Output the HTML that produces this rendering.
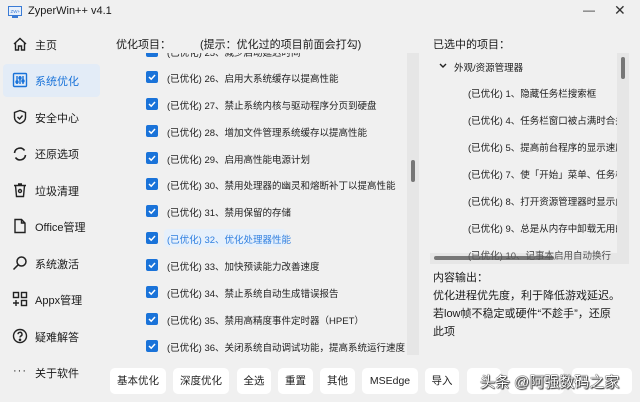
<!DOCTYPE html>
<html><head><meta charset="utf-8"><style>
*{margin:0;padding:0;box-sizing:border-box}
body{width:640px;height:402px;background:#f0f0f0;font-family:"Liberation Sans","Noto Sans CJK SC",sans-serif;color:#1a1a1a;position:relative;overflow:hidden}
.a{position:absolute;white-space:nowrap}
.nav{font-size:11px}
.sel{background:#e3ecf7;border-radius:4px}
.cb{position:absolute;left:6px;width:12px;height:12px;background:#1a73d9;border-radius:2px}
.cb svg{position:absolute;left:1px;top:1px}
.it{position:absolute;left:27px;font-size:9.5px;color:#222;white-space:nowrap}
.r{position:absolute;left:38px;font-size:9.5px;color:#222;white-space:nowrap}
.btn{position:absolute;top:368px;height:26px;background:#fff;border-radius:5px;font-size:10.5px;text-align:center;line-height:26px;color:#222}
</style></head><body>
<svg class="a" style="left:8px;top:6px" width="14" height="12"><rect x="0.5" y="0.5" width="13" height="9" fill="#e8f0fb" stroke="#3a7bd5"/><rect x="4" y="10" width="6" height="2" fill="#3a7bd5"/><text x="2.5" y="7" font-size="4.5" fill="#3a7bd5" font-family="Liberation Sans">ZW+</text></svg>
<div class="a" style="left:28px;top:5px;font-size:11px">ZyperWin++ v4.1</div>
<div class="a" style="left:583px;top:3px;font-size:12px;color:#333">—</div>
<div class="a" style="left:614px;top:2px;font-size:14px;color:#333">✕</div>

<div class="a sel" style="left:3px;top:64px;width:97px;height:33px"></div>
<svg class="a" style="left:12px;top:36px" width="16" height="16" fill="none" stroke="#222" stroke-width="1.4"><path d="M2 8L8 2.5 14 8M3.5 7v7h3v-4h3v4h3V7"/></svg>
<div class="a nav" style="left:35px;top:37px">主页</div>
<svg class="a" style="left:12px;top:72px" width="16" height="16" fill="none" stroke="#1a73d9" stroke-width="1.4"><rect x="1.5" y="1.5" width="13" height="13" rx="1"/><path d="M5 4v8M8 4v8M11 4v8"/><circle cx="5" cy="10" r="1" fill="#1a73d9"/><circle cx="8" cy="6" r="1" fill="#1a73d9"/><circle cx="11" cy="9" r="1" fill="#1a73d9"/></svg>
<div class="a nav" style="left:35px;top:73px;color:#1a73d9">系统优化</div>
<svg class="a" style="left:12px;top:109px" width="16" height="16" fill="none" stroke="#222" stroke-width="1.4"><path d="M8 1.5L2.5 3.5v5c0 3 2.5 5 5.5 6 3-1 5.5-3 5.5-6v-5z"/><path d="M5.5 8l2 2 3-3.5"/></svg>
<div class="a nav" style="left:35px;top:110px">安全中心</div>
<svg class="a" style="left:12px;top:146px" width="16" height="16" fill="none" stroke="#222" stroke-width="1.6"><path d="M2.5 7a5.5 5.5 0 0 1 10-2.5M13.5 9a5.5 5.5 0 0 1-10 2.5"/></svg>
<div class="a nav" style="left:35px;top:146px">还原选项</div>
<svg class="a" style="left:12px;top:182px" width="16" height="16" fill="none" stroke="#222" stroke-width="1.4"><path d="M2 3.5h12M3.5 3.5l1 11h7l1-11M6 2h4"/><circle cx="8" cy="9" r="1.5"/></svg>
<div class="a nav" style="left:35px;top:183px">垃圾清理</div>
<svg class="a" style="left:12px;top:218px" width="16" height="16" fill="none" stroke="#222" stroke-width="1.4"><path d="M3 1.5h6.5l3.5 3.5v9.5H3zM9.5 1.5V5H13"/></svg>
<div class="a nav" style="left:35px;top:219px">Office管理</div>
<svg class="a" style="left:12px;top:255px" width="16" height="16" fill="none" stroke="#222" stroke-width="1.5"><circle cx="9.5" cy="6.5" r="4.5"/><path d="M6.3 9.7L1.5 14.5"/></svg>
<div class="a nav" style="left:35px;top:256px">系统激活</div>
<svg class="a" style="left:12px;top:291px" width="16" height="16" fill="none" stroke="#222" stroke-width="1.4"><rect x="1.5" y="1.5" width="5" height="5"/><rect x="9.5" y="1.5" width="5" height="5"/><rect x="9.5" y="9.5" width="5" height="5"/><path d="M4 9v6M1 12h6"/></svg>
<div class="a nav" style="left:35px;top:292px">Appx管理</div>
<svg class="a" style="left:12px;top:328px" width="16" height="16" fill="none" stroke="#222" stroke-width="1.4"><circle cx="8" cy="8" r="6.5"/><path d="M6 6.2a2 2 0 1 1 2.5 2c-.4.2-.5.6-.5 1.3"/><circle cx="8" cy="11.8" r=".6" fill="#222"/></svg>
<div class="a nav" style="left:35px;top:329px">疑难解答</div>
<div class="a" style="left:13px;top:365px;font-size:11px;letter-spacing:1px">···</div>
<div class="a nav" style="left:35px;top:365px">关于软件</div>

<div class="a" style="left:116px;top:36px;font-size:11px">优化项目：</div>
<div class="a" style="left:200px;top:36px;font-size:11px">(提示：优化过的项目前面会打勾)</div>

<div class="a" style="left:140px;top:53px;width:267px;height:302px;overflow:hidden">
<div class="a sel" style="left:24px;top:176px;width:122px;height:18px;background:#e6f0fb"></div>
<div class="cb" style="top:-8px"></div><div class="it" style="top:-8px">(已优化) 25、减少启动延迟时间</div>
<div class="cb" style="top:18px"><svg width="10" height="10"><path d="M2 5l2.2 2.2L8 3" stroke="#fff" stroke-width="1.5" fill="none"/></svg></div><div class="it" style="top:18px">(已优化) 26、启用大系统缓存以提高性能</div>
<div class="cb" style="top:45px"><svg width="10" height="10"><path d="M2 5l2.2 2.2L8 3" stroke="#fff" stroke-width="1.5" fill="none"/></svg></div><div class="it" style="top:45px">(已优化) 27、禁止系统内核与驱动程序分页到硬盘</div>
<div class="cb" style="top:72px"><svg width="10" height="10"><path d="M2 5l2.2 2.2L8 3" stroke="#fff" stroke-width="1.5" fill="none"/></svg></div><div class="it" style="top:72px">(已优化) 28、增加文件管理系统缓存以提高性能</div>
<div class="cb" style="top:99px"><svg width="10" height="10"><path d="M2 5l2.2 2.2L8 3" stroke="#fff" stroke-width="1.5" fill="none"/></svg></div><div class="it" style="top:99px">(已优化) 29、启用高性能电源计划</div>
<div class="cb" style="top:125px"><svg width="10" height="10"><path d="M2 5l2.2 2.2L8 3" stroke="#fff" stroke-width="1.5" fill="none"/></svg></div><div class="it" style="top:125px">(已优化) 30、禁用处理器的幽灵和熔断补丁以提高性能</div>
<div class="cb" style="top:152px"><svg width="10" height="10"><path d="M2 5l2.2 2.2L8 3" stroke="#fff" stroke-width="1.5" fill="none"/></svg></div><div class="it" style="top:152px">(已优化) 31、禁用保留的存储</div>
<div class="cb" style="top:179px"><svg width="10" height="10"><path d="M2 5l2.2 2.2L8 3" stroke="#fff" stroke-width="1.5" fill="none"/></svg></div><div class="it" style="top:179px;color:#2f7fe0">(已优化) 32、优化处理器性能</div>
<div class="cb" style="top:206px"><svg width="10" height="10"><path d="M2 5l2.2 2.2L8 3" stroke="#fff" stroke-width="1.5" fill="none"/></svg></div><div class="it" style="top:206px">(已优化) 33、加快预读能力改善速度</div>
<div class="cb" style="top:233px"><svg width="10" height="10"><path d="M2 5l2.2 2.2L8 3" stroke="#fff" stroke-width="1.5" fill="none"/></svg></div><div class="it" style="top:233px">(已优化) 34、禁止系统自动生成错误报告</div>
<div class="cb" style="top:260px"><svg width="10" height="10"><path d="M2 5l2.2 2.2L8 3" stroke="#fff" stroke-width="1.5" fill="none"/></svg></div><div class="it" style="top:260px">(已优化) 35、禁用高精度事件定时器（HPET）</div>
<div class="cb" style="top:287px"><svg width="10" height="10"><path d="M2 5l2.2 2.2L8 3" stroke="#fff" stroke-width="1.5" fill="none"/></svg></div><div class="it" style="top:287px">(已优化) 36、关闭系统自动调试功能，提高系统运行速度</div>
</div>
<div class="a" style="left:407px;top:53px;width:12px;height:302px;background:#e6e6e6"></div>
<div class="a" style="left:411px;top:160px;width:4px;height:22px;background:#777;border-radius:2px"></div>

<div class="a" style="left:433px;top:36px;font-size:11px">已选中的项目：</div>
<div class="a" style="left:430px;top:53px;width:187px;height:200px;overflow:hidden">
 <svg class="a" style="left:9px;top:10px" width="8" height="6"><path d="M1 1l3 3 3-3" stroke="#222" stroke-width="1.4" fill="none"/></svg>
 <div class="a" style="left:24px;top:7px;font-size:9.5px">外观/资源管理器</div>
 <div class="r" style="top:33px">(已优化) 1、隐藏任务栏搜索框</div>
 <div class="r" style="top:60px">(已优化) 4、任务栏窗口被占满时合并</div>
 <div class="r" style="top:87px">(已优化) 5、提高前台程序的显示速度</div>
 <div class="r" style="top:114px">(已优化) 7、使「开始」菜单、任务栏、操作中心</div>
 <div class="r" style="top:141px">(已优化) 8、打开资源管理器时显示此电脑</div>
 <div class="r" style="top:168px">(已优化) 9、总是从内存中卸载无用的DLL</div>
 <div class="r" style="top:195px">(已优化) 10、记事本启用自动换行</div>
</div>
<div class="a" style="left:617px;top:53px;width:12px;height:200px;background:#e6e6e6"></div>
<div class="a" style="left:621px;top:57px;width:4px;height:22px;background:#777;border-radius:2px"></div>
<div class="a" style="left:430px;top:253px;width:199px;height:11px;background:#e6e6e6"></div>
<div class="a" style="left:434px;top:256px;width:120px;height:4px;background:#777;border-radius:2px"></div>
<div class="r" style="left:468px;top:248px;color:#555;z-index:1">(已优化) 10、记事本启用自动换行</div>

<div class="a" style="left:433px;top:269px;font-size:11px;line-height:18px">内容输出：<br>优化进程优先度，利于降低游戏延迟。<br>若low帧不稳定或硬件“不趁手”，还原<br>此项</div>

<div class="btn" style="left:110px;width:56px">基本优化</div>
<div class="btn" style="left:173px;width:56px">深度优化</div>
<div class="btn" style="left:237px;width:34px">全选</div>
<div class="btn" style="left:278px;width:35px">重置</div>
<div class="btn" style="left:320px;width:35px">其他</div>
<div class="btn" style="left:362px;width:56px">MSEdge</div>
<div class="btn" style="left:425px;width:34px">导入</div>
<div class="btn" style="left:467px;width:34px"></div>
<div class="btn" style="left:508px;width:56px"></div>
<div class="btn" style="left:572px;width:60px"></div>
<div class="a" style="left:480px;top:371px;font-size:15px;color:#fff;text-shadow:0 0 1px #000,0 0 1px #000,1px 1px 1px #333">头条 @阿强数码之家</div>
</body></html>
